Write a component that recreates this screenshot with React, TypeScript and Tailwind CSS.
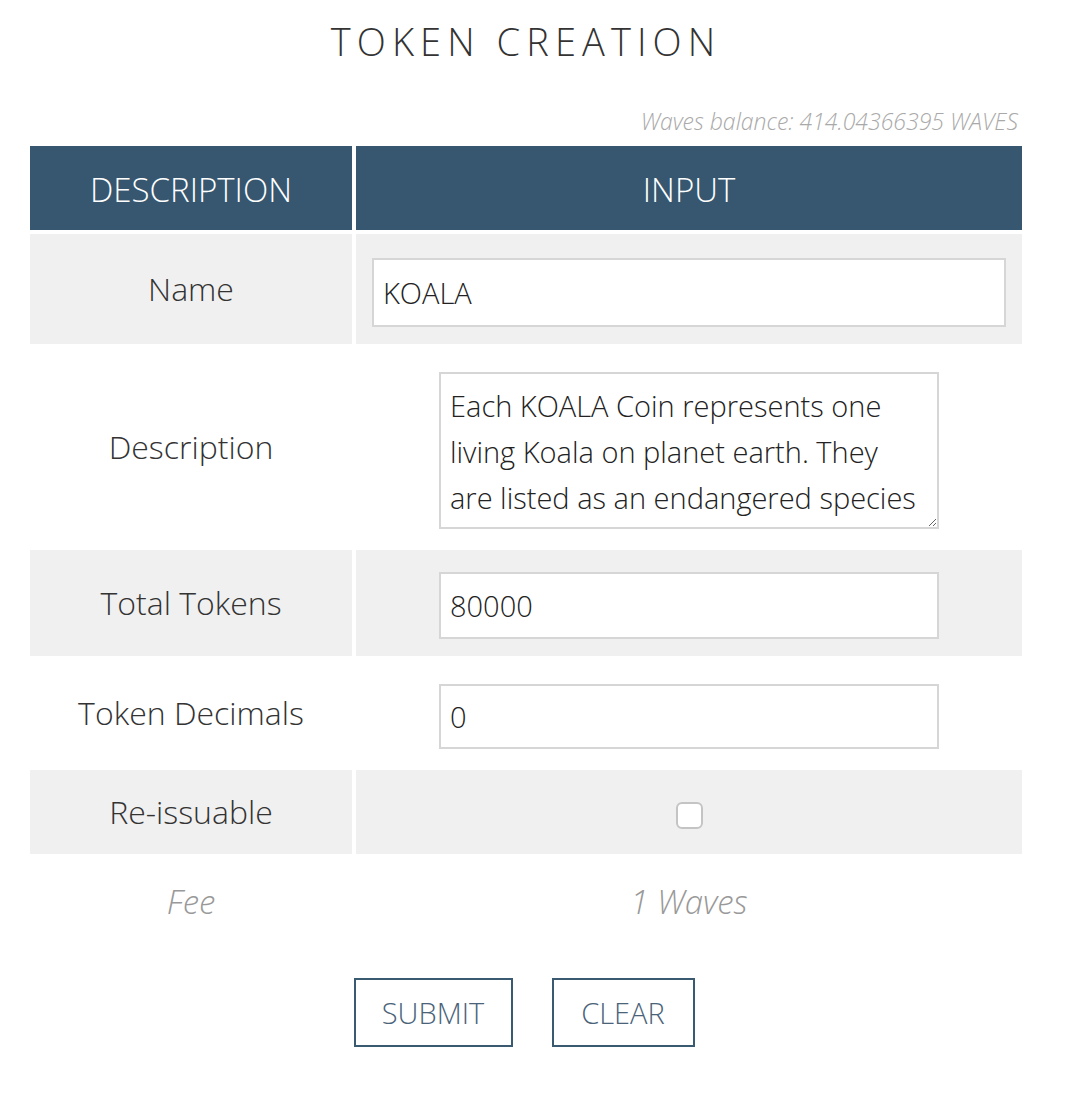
import React, { useState } from 'react';

const font = { fontFamily: '"Open Sans", "Noto Sans", sans-serif' };

const Label: React.FC<{ text: string; gray?: boolean }> = ({ text, gray }) => (
  <div
    className={`flex items-center justify-center text-[32px] font-light text-[#333] ${gray ? 'bg-[#f0f0f0]' : 'bg-white'}`}
  >
    {text}
  </div>
);

export default function App() {
  const [name, setName] = useState('KOALA');
  const [description, setDescription] = useState(
    'Each KOALA Coin represents one living Koala on planet earth. They are listed as an endangered species'
  );
  const [total, setTotal] = useState('80000');
  const [decimals, setDecimals] = useState('0');
  const [reissuable, setReissuable] = useState(false);

  const inputClass =
    'block border-2 border-[#d6d6d6] bg-white px-[9px] text-[29px] font-light text-[#222] outline-none';

  return (
    <div className="min-h-screen bg-white" style={font}>
      <div className="ml-[30px] w-[992px]">
        <h1 className="pt-[13px] text-center text-[38px] font-light leading-[56px] tracking-[0.16em] text-[#333]">
          TOKEN CREATION
        </h1>

        <div className="mt-[38px] pr-[4px] text-right text-[23px] font-light italic leading-[28px] text-[#a9a9a9]">
          Waves balance: 414.04366395 WAVES
        </div>

        <div className="mt-[11px] grid grid-cols-[322px_666px] gap-[4px]">
          <div className="flex h-[84px] items-center justify-center bg-[#36576f] pt-[4px] text-[33px] font-light text-white">
            DESCRIPTION
          </div>
          <div className="flex h-[84px] items-center justify-center bg-[#36576f] pt-[4px] text-[33px] font-light text-white">
            INPUT
          </div>

          <Label text="Name" gray />
          <div className="bg-[#f0f0f0] px-[16px] pt-[24px] pb-[17px]">
            <input
              value={name}
              onChange={(e) => setName(e.target.value)}
              className={`${inputClass} h-[69px] w-full`}
            />
          </div>

          <Label text="Description" />
          <div className="flex justify-center pt-[24px] pb-[17px]">
            <textarea
              value={description}
              onChange={(e) => setDescription(e.target.value)}
              className={`${inputClass} h-[157px] w-[500px] resize pt-[9px] pb-[4px] leading-[46px]`}
            />
          </div>

          <Label text="Total Tokens" gray />
          <div className="flex justify-center bg-[#f0f0f0] pt-[22px] pb-[17px]">
            <input
              value={total}
              onChange={(e) => setTotal(e.target.value)}
              className={`${inputClass} h-[67px] w-[500px]`}
            />
          </div>

          <Label text="Token Decimals" />
          <div className="flex justify-center pt-[24px] pb-[17px]">
            <input
              value={decimals}
              onChange={(e) => setDecimals(e.target.value)}
              className={`${inputClass} h-[65px] w-[500px]`}
            />
          </div>

          <Label text="Re-issuable" gray />
          <div className="flex h-[84px] items-center justify-center bg-[#f0f0f0] pt-[6px]">
            <input
              type="checkbox"
              checked={reissuable}
              onChange={(e) => setReissuable(e.target.checked)}
              className="h-[27px] w-[27px] appearance-none rounded-[6px] border-2 border-[#c4c4c4] bg-white checked:bg-[#36576f]"
            />
          </div>

          <div className="flex h-[88px] items-center justify-center text-[33px] font-light italic text-[#999]">
            Fee
          </div>
          <div className="flex h-[88px] items-center justify-center text-[33px] font-light italic text-[#999]">
            1 Waves
          </div>
        </div>

        <div className="mt-[32px] flex justify-center gap-[39px] pr-[4px]">
          <button className="h-[69px] w-[159px] border-2 border-[#3a5a72] bg-white text-[29px] font-light text-[#4a6379]">
            SUBMIT
          </button>
          <button
            onClick={() => {
              setName('');
              setDescription('');
              setTotal('');
              setDecimals('');
              setReissuable(false);
            }}
            className="h-[69px] w-[143px] border-2 border-[#3a5a72] bg-white text-[29px] font-light text-[#4a6379]"
          >
            CLEAR
          </button>
        </div>
      </div>
    </div>
  );
}
